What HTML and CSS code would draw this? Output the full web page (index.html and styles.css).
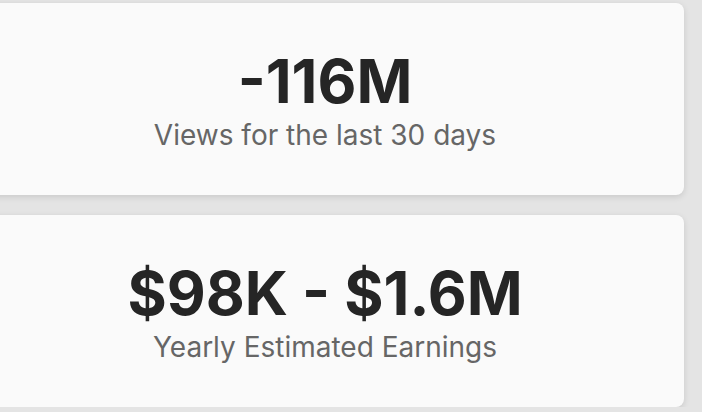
FILE: index.html
```html
<!DOCTYPE html>
<html>
<head>
<meta charset="utf-8">
<link rel="stylesheet" href="styles.css">
</head>
<body>
<div class="stack">
  <div class="card">
    <div class="value">-116M</div>
    <div class="label">Views for the last 30 days</div>
  </div>
  <div class="card">
    <div class="value">$98K - $1.6M</div>
    <div class="label">Yearly Estimated Earnings</div>
  </div>
</div>
</body>
</html>
```
FILE: styles.css
```css
html, body {
  margin: 0;
  padding: 0;
  background: #e4e4e4;
  font-family: Inter, "Noto Sans", sans-serif;
  overflow: hidden;
}
.stack {
  display: flex;
  flex-direction: column;
  gap: 20px;
  margin-left: -34px;
  width: 718px;
  padding-top: 3px;
}
.card {
  height: 192px;
  box-sizing: border-box;
  padding-top: 3px;
  background: #fafafa;
  border-radius: 8px;
  box-shadow: 0 2px 6px rgba(0,0,0,0.12);
  display: flex;
  flex-direction: column;
  align-items: center;
  justify-content: center;
}
.value {
  font-size: 60px;
  font-weight: 700;
  color: #252525;
  line-height: 62px;
}
.label {
  font-size: 28px;
  color: #666;
  line-height: 34px;
  margin-top: 6px;
}
```
